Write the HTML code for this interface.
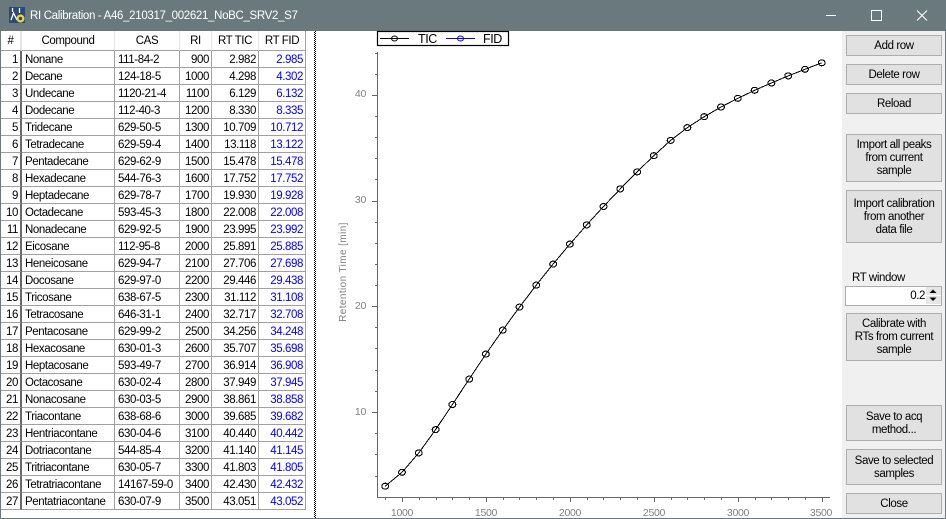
<!DOCTYPE html>
<html><head><meta charset="utf-8"><style>
html,body{margin:0;padding:0;background:#fff}
#w{position:relative;width:946px;height:519px;overflow:hidden;background:#fff;font:11.5px "Liberation Sans",Arial,sans-serif;letter-spacing:-.4px;color:#000}
#tb{position:absolute;left:0;top:0;width:946px;height:31px;background:#69797e}
#tt{position:absolute;left:30px;top:9px;color:#fff;font-size:11.5px;line-height:14px;white-space:nowrap;letter-spacing:-.33px}
#bl{position:absolute;left:0;top:31px;width:1px;height:488px;background:#69797e}
#br{position:absolute;left:945px;top:31px;width:1px;height:488px;background:#69797e}
#bb{position:absolute;left:0;top:518px;width:946px;height:1px;background:#69797e}
table{position:absolute;left:1px;top:31px;border-collapse:separate;border-spacing:0;table-layout:fixed;width:305px;font-size:11.5px;letter-spacing:-.4px}
th{height:20px;box-sizing:border-box;font-weight:normal;border-right:1px solid #e4e4e4;border-bottom:1px solid #a0a0a0;padding:0;text-align:center}
td{height:17px;box-sizing:border-box;padding:2px 0 0;vertical-align:top;border-right:1px solid #a0a0a0;border-bottom:1px solid #a0a0a0;white-space:nowrap;line-height:14px;overflow:hidden}
th:first-child{border-right:2px solid #e4e4e4}
td:first-child{text-align:right;border-right:2px solid #696969;padding-right:2px}
td:nth-child(2){padding-left:3px}
td:nth-child(3){padding-left:3px}
td:nth-child(4),td:nth-child(5),td:nth-child(6){text-align:right;padding-right:2px}
td:nth-child(6){color:#0000ff}
#sp{position:absolute;left:314px;top:31px;width:2px;height:487px;background:repeating-conic-gradient(#000 0 25%,#fff 0 50%) 0 0/2px 2px}
#rp{position:absolute;left:842px;top:31px;width:103px;height:487px;background:#f0f0f0}
.b{position:absolute;left:846px;width:96px;box-sizing:border-box;background:#e1e1e1;border:1px solid #adadad;display:flex;align-items:center;justify-content:center;text-align:center;line-height:13px;padding-top:1px}
.p{padding-top:2px}
#lab{position:absolute;left:852px;top:271px;line-height:14px}
#spin{position:absolute;left:845px;top:286px;width:97px;height:20px;box-sizing:border-box;background:#fff;border:1px solid #adadad;text-align:right;padding-right:16px;line-height:18px}
#u,#d{position:absolute;left:926px;width:15px;background:#e6e6e6}
svg{position:absolute;left:0;top:0}
</style></head><body><div id="w">
<div id="tb"></div>
<svg width="946" height="31">
<rect x="9" y="7" width="16" height="16" fill="#2c4a78"/>
<path d="M12.500 8v4M19.500 8v5M11 20l2.500-7 3.500 7" stroke="#fff" stroke-width="1.300" fill="none"/>
<circle cx="20.500" cy="18.500" r="2.900" fill="none" stroke="#f5d33c" stroke-width="2.200"/>
<path d="M826 15.500h10" stroke="#fff" stroke-width="1"/>
<rect x="871.500" y="10.500" width="10" height="10" fill="none" stroke="#fff"/>
<path d="M917 10.500l10 10M927 10.500l-10 10" stroke="#fff" stroke-width="1.100"/>
</svg>
<div id="tt">RI Calibration - A46_210317_002621_NoBC_SRV2_S7</div>
<table><colgroup><col style="width:21px"><col style="width:93px"><col style="width:65px"><col style="width:32px"><col style="width:47px"><col style="width:47px"></colgroup>
<tr><th>#</th><th>Compound</th><th>CAS</th><th>RI</th><th>RT TIC</th><th style="border-right:1px solid #a0a0a0">RT FID</th></tr>
<tr><td>1</td><td>Nonane</td><td>111-84-2</td><td>900</td><td>2.982</td><td>2.985</td></tr>
<tr><td>2</td><td>Decane</td><td>124-18-5</td><td>1000</td><td>4.298</td><td>4.302</td></tr>
<tr><td>3</td><td>Undecane</td><td>1120-21-4</td><td>1100</td><td>6.129</td><td>6.132</td></tr>
<tr><td>4</td><td>Dodecane</td><td>112-40-3</td><td>1200</td><td>8.330</td><td>8.335</td></tr>
<tr><td>5</td><td>Tridecane</td><td>629-50-5</td><td>1300</td><td>10.709</td><td>10.712</td></tr>
<tr><td>6</td><td>Tetradecane</td><td>629-59-4</td><td>1400</td><td>13.118</td><td>13.122</td></tr>
<tr><td>7</td><td>Pentadecane</td><td>629-62-9</td><td>1500</td><td>15.478</td><td>15.478</td></tr>
<tr><td>8</td><td>Hexadecane</td><td>544-76-3</td><td>1600</td><td>17.752</td><td>17.752</td></tr>
<tr><td>9</td><td>Heptadecane</td><td>629-78-7</td><td>1700</td><td>19.930</td><td>19.928</td></tr>
<tr><td>10</td><td>Octadecane</td><td>593-45-3</td><td>1800</td><td>22.008</td><td>22.008</td></tr>
<tr><td>11</td><td>Nonadecane</td><td>629-92-5</td><td>1900</td><td>23.995</td><td>23.992</td></tr>
<tr><td>12</td><td>Eicosane</td><td>112-95-8</td><td>2000</td><td>25.891</td><td>25.885</td></tr>
<tr><td>13</td><td>Heneicosane</td><td>629-94-7</td><td>2100</td><td>27.706</td><td>27.698</td></tr>
<tr><td>14</td><td>Docosane</td><td>629-97-0</td><td>2200</td><td>29.446</td><td>29.438</td></tr>
<tr><td>15</td><td>Tricosane</td><td>638-67-5</td><td>2300</td><td>31.112</td><td>31.108</td></tr>
<tr><td>16</td><td>Tetracosane</td><td>646-31-1</td><td>2400</td><td>32.717</td><td>32.708</td></tr>
<tr><td>17</td><td>Pentacosane</td><td>629-99-2</td><td>2500</td><td>34.256</td><td>34.248</td></tr>
<tr><td>18</td><td>Hexacosane</td><td>630-01-3</td><td>2600</td><td>35.707</td><td>35.698</td></tr>
<tr><td>19</td><td>Heptacosane</td><td>593-49-7</td><td>2700</td><td>36.914</td><td>36.908</td></tr>
<tr><td>20</td><td>Octacosane</td><td>630-02-4</td><td>2800</td><td>37.949</td><td>37.945</td></tr>
<tr><td>21</td><td>Nonacosane</td><td>630-03-5</td><td>2900</td><td>38.861</td><td>38.858</td></tr>
<tr><td>22</td><td>Triacontane</td><td>638-68-6</td><td>3000</td><td>39.685</td><td>39.682</td></tr>
<tr><td>23</td><td>Hentriacontane</td><td>630-04-6</td><td>3100</td><td>40.440</td><td>40.442</td></tr>
<tr><td>24</td><td>Dotriacontane</td><td>544-85-4</td><td>3200</td><td>41.140</td><td>41.145</td></tr>
<tr><td>25</td><td>Tritriacontane</td><td>630-05-7</td><td>3300</td><td>41.803</td><td>41.805</td></tr>
<tr><td>26</td><td>Tetratriacontane</td><td>14167-59-0</td><td>3400</td><td>42.430</td><td>42.432</td></tr>
<tr><td>27</td><td>Pentatriacontane</td><td>630-07-9</td><td>3500</td><td>43.051</td><td>43.052</td></tr>
</table>
<div id="sp"></div>
<svg width="842" height="519" style="left:0;top:0">
<g stroke="#666" fill="none" shape-rendering="crispEdges">
<path d="M377.500 52V497.500H830"/>
<path d="M372 95.500h5M372 201.500h5M372 306.500h5M372 412.500h5"/>
<path d="M375 53.500h2M375 74.500h2M375 116.500h2M375 137.500h2M375 158.500h2M375 179.500h2M375 222.500h2M375 243.500h2M375 264.500h2M375 285.500h2M375 327.500h2M375 348.500h2M375 370.500h2M375 391.500h2M375 433.500h2M375 454.500h2M375 476.500h2"/>
<path d="M402.500 497v5M486.500 497v5M570.500 497v5M654.500 497v5M738.500 497v5M822.500 497v5"/>
<path d="M385.500 497v3M419.500 497v3M436.500 497v3M452.500 497v3M469.500 497v3M503.500 497v3M519.500 497v3M536.500 497v3M553.500 497v3M587.500 497v3M603.500 497v3M620.500 497v3M637.500 497v3M671.500 497v3M687.500 497v3M704.500 497v3M721.500 497v3M755.500 497v3M771.500 497v3M788.500 497v3M805.500 497v3"/>
</g>
<g fill="#808080" font-family="Liberation Sans,Arial,sans-serif" font-size="10.5" letter-spacing="-.3">
<text x="366" y="97" text-anchor="end">40</text><text x="366" y="203" text-anchor="end">30</text><text x="366" y="309" text-anchor="end">20</text><text x="366" y="415" text-anchor="end">10</text>
<text x="402" y="516" text-anchor="middle">1000</text><text x="486" y="516" text-anchor="middle">1500</text><text x="570" y="516" text-anchor="middle">2000</text><text x="654" y="516" text-anchor="middle">2500</text><text x="738" y="516" text-anchor="middle">3000</text><text x="821" y="516" text-anchor="middle">3500</text>
<text transform="translate(346,272) rotate(-90)" text-anchor="middle" font-size="10" letter-spacing=".4">Retention Time [min]</text>
</g>
<polyline fill="none" stroke="#000" stroke-width="1" shape-rendering="crispEdges" points="385.2,486.2 402,472.3 418.8,452.9 435.6,429.6 452.4,404.5 469.2,379.1 485.9,354.1 502.7,330.1 519.5,307.1 536.3,285.1 553.1,264.1 569.9,244.1 586.7,224.9 603.5,206.5 620.3,188.9 637.1,171.9 653.8,155.7 670.6,140.4 687.4,127.6 704.2,116.7 721,107 737.8,98.3 754.6,90.3 771.4,83 788.2,75.9 805,69.3 821.7,62.8"/>
<g fill="none" stroke="#000" stroke-width="1.100" shape-rendering="crispEdges">
<ellipse cx="385.2" cy="486.2" rx="3.400" ry="3"/><ellipse cx="402" cy="472.3" rx="3.400" ry="3"/><ellipse cx="418.8" cy="452.9" rx="3.400" ry="3"/><ellipse cx="435.6" cy="429.6" rx="3.400" ry="3"/><ellipse cx="452.4" cy="404.5" rx="3.400" ry="3"/><ellipse cx="469.2" cy="379.1" rx="3.400" ry="3"/><ellipse cx="485.9" cy="354.1" rx="3.400" ry="3"/><ellipse cx="502.7" cy="330.1" rx="3.400" ry="3"/><ellipse cx="519.5" cy="307.1" rx="3.400" ry="3"/><ellipse cx="536.3" cy="285.1" rx="3.400" ry="3"/><ellipse cx="553.1" cy="264.1" rx="3.400" ry="3"/><ellipse cx="569.9" cy="244.1" rx="3.400" ry="3"/><ellipse cx="586.7" cy="224.9" rx="3.400" ry="3"/><ellipse cx="603.5" cy="206.5" rx="3.400" ry="3"/><ellipse cx="620.3" cy="188.9" rx="3.400" ry="3"/><ellipse cx="637.1" cy="171.9" rx="3.400" ry="3"/><ellipse cx="653.8" cy="155.7" rx="3.400" ry="3"/><ellipse cx="670.6" cy="140.4" rx="3.400" ry="3"/><ellipse cx="687.4" cy="127.6" rx="3.400" ry="3"/><ellipse cx="704.2" cy="116.7" rx="3.400" ry="3"/><ellipse cx="721" cy="107" rx="3.400" ry="3"/><ellipse cx="737.8" cy="98.3" rx="3.400" ry="3"/><ellipse cx="754.6" cy="90.3" rx="3.400" ry="3"/><ellipse cx="771.4" cy="83" rx="3.400" ry="3"/><ellipse cx="788.2" cy="75.9" rx="3.400" ry="3"/><ellipse cx="805" cy="69.3" rx="3.400" ry="3"/><ellipse cx="821.7" cy="62.8" rx="3.400" ry="3"/>
</g>
<rect x="377.500" y="31.500" width="131" height="14" fill="#fff" stroke="#000" stroke-width="1.200"/>
<path d="M380 38.500h29" stroke="#000" stroke-width="1"/><ellipse cx="394.500" cy="38.500" rx="3" ry="2.500" fill="none" stroke="#000"/>
<path d="M446 38.500h29" stroke="#0000ff" stroke-width="1"/><ellipse cx="460.500" cy="38.500" rx="3" ry="2.500" fill="none" stroke="#0000ff"/>
<g font-family="Liberation Sans,Arial,sans-serif" font-size="12.5" fill="#000"><text x="418" y="43">TIC</text><text x="483" y="43">FID</text></g>
</svg>
<div id="rp"></div>
<div class="b p" style="top:35px;height:21px">Add row</div>
<div class="b p" style="top:64px;height:21px">Delete row</div>
<div class="b p" style="top:93px;height:21px">Reload</div>
<div class="b" style="top:134px;height:48px">Import all peaks<br>from current<br>sample</div>
<div class="b p" style="top:190px;height:53px">Import calibration<br>from another<br>data file</div>
<div id="lab">RT window</div>
<div id="spin">0.2</div>
<div id="u" style="top:287px;height:8px"></div><div id="d" style="top:296px;height:8px"></div>
<svg width="946" height="519" style="pointer-events:none"><path d="M933 289.500l3.500 3.500h-7zM933 301l3.500-3.500h-7z" fill="#000"/></svg>
<div class="b" style="top:313px;height:48px">Calibrate with<br>RTs from current<br>sample</div>
<div class="b p" style="top:405px;height:36px">Save to acq<br>method...</div>
<div class="b p" style="top:449px;height:36px">Save to selected<br>samples</div>
<div class="b p" style="top:493px;height:21px">Close</div>
<div id="bl"></div><div id="br"></div><div id="bb"></div>
</div></body></html>
